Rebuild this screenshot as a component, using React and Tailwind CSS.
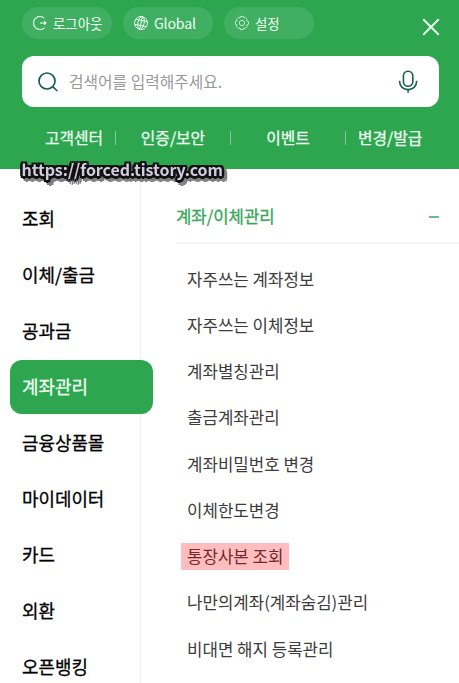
import { X } from 'lucide-react'

const LogoutIcon = () => (
  <svg className="h-4 w-4 shrink-0" viewBox="0 0 16 16" fill="none" stroke="currentColor" strokeWidth="1.1">
    <path d="M12.4 3.2A6.5 6.5 0 1 0 12.4 12.8" />
    <path d="M8 8h6" />
    <path d="M12 5.6L14.8 8 12 10.4z" fill="currentColor" stroke="none" />
  </svg>
)

const GlobeIcon = () => (
  <svg className="h-4 w-4 shrink-0" viewBox="0 0 16 16" fill="none" stroke="currentColor" strokeWidth="0.9">
    <g transform="rotate(12 8 8)">
      <circle cx="8" cy="8" r="6.5" />
      <ellipse cx="8" cy="8" rx="3.1" ry="6.5" />
      <path d="M8 1.5v13M2.2 5.4h11.6M2.2 10.6h11.6" />
    </g>
  </svg>
)

const GearIcon = () => (
  <svg className="h-4 w-4 shrink-0 opacity-80" viewBox="0 0 16 16" fill="none" stroke="currentColor" strokeWidth="0.9">
    <path d="M6.6 1.4h2.8l.5 1.5 1.4-.6 2 2-.7 1.4 1.9.8v2.9l-1.8.6.6 1.5-2 2-1.5-.6-.6 1.7H6.5l-.5-1.7-1.5.6-2-2 .7-1.5-1.8-.6V6.5l1.8-.6-.7-1.5 2-2 1.5.6z" strokeLinejoin="round" />
    <circle cx="8" cy="8" r="2.7" />
  </svg>
)

const SearchIcon = () => (
  <svg className="h-5 w-5 shrink-0" viewBox="0 0 20 20" fill="none" stroke="#175f4b" strokeWidth="1.7">
    <circle cx="9" cy="9" r="8" />
    <path d="M14.7 14.7l4.6 4.3" />
  </svg>
)

const MicIcon = () => (
  <svg className="h-6 w-5 shrink-0" viewBox="0 0 20 24" fill="none" stroke="#175f4b" strokeWidth="1.6">
    <rect x="5.4" y="1.3" width="9.4" height="15" rx="4.7" />
    <path d="M1.6 10.8v.8c0 4.7 3.7 8 8.5 8s8.5-3.3 8.5-8v-.8M10.1 19.6v3.2" />
  </svg>
)

const quickLinks = [
  { label: '로그아웃', icon: LogoutIcon },
  { label: 'Global', icon: GlobeIcon },
  { label: '설정', icon: GearIcon },
]

const categories = ['조회', '이체/출금', '공과금', '계좌관리', '금융상품몰', '마이데이터', '카드', '외환', '오픈뱅킹']

const menuItems = [
  '자주쓰는 계좌정보',
  '자주쓰는 이체정보',
  '계좌별칭관리',
  '출금계좌관리',
  '계좌비밀번호 변경',
  '이체한도변경',
  '통장사본 조회',
  '나만의계좌(계좌숨김)관리',
  '비대면 해지 등록관리',
]

const App = () => {
  return (
    <div className="relative flex h-[683px] w-[459px] flex-col overflow-hidden bg-white font-['Noto_Sans_CJK_KR',sans-serif] whitespace-nowrap">
      {/* Header */}
      <header className="h-[169px] shrink-0 bg-[#2ea650] pt-[7px] text-[#effff3]">
        <div className="flex h-8 items-center pr-[18px] pl-[22px]">
          <div className="flex gap-[11px]">
            {quickLinks.map(({ label, icon: Icon }) => (
              <button key={label} className="flex h-8 w-[90px] items-center gap-[5px] rounded-full bg-[#40af61] pl-[10px] text-[13.4px]">
                <Icon />
                <span className={label === 'Global' ? 'pt-px text-[14.2px] tracking-[-0.2px]' : ''}>{label}</span>
              </button>
            ))}
          </div>
          <X className="mt-2 ml-auto h-5 w-5 scale-[1.45]" strokeWidth={1.5} />
        </div>

        {/* Search */}
        <div className="mt-[17px] ml-[22px] flex h-[51px] w-[417px] items-center rounded-xl bg-white pr-[21px] pl-4">
          <SearchIcon />
          <span className="ml-[11px] text-[15.8px] text-[#999]">검색어를 입력해주세요.</span>
          <span className="ml-auto">
            <MicIcon />
          </span>
        </div>

        <nav className="mt-[19px] flex h-6 items-center text-[15.8px] [-webkit-text-stroke:0.25px_currentColor]">
          <span className="w-[115px] pl-[45px]">고객센터</span>
          <i className="h-[14px] w-px bg-[#82cb96]" />
          <span className="w-[114px] text-center">인증/보안</span>
          <i className="h-[14px] w-px bg-[#82cb96]" />
          <span className="w-[114px] text-center">이벤트</span>
          <i className="h-[14px] w-px bg-[#82cb96]" />
          <span className="pl-[12px]">변경/발급</span>
        </nav>
      </header>

      <div className="flex flex-1">
        {/* Categories */}
        <aside className="w-[141px] shrink-0 border-r border-[#eee] pt-[22px] pl-[10px]">
          {categories.map((name) => (
            <div key={name} className="flex h-[56.1px] items-center">
              <div
                className={
                  name === '계좌관리'
                    ? 'relative flex h-[54px] w-[143px] shrink-0 items-center rounded-xl bg-[#2ea650] pb-[2px] pl-3 text-[17.9px] text-[#effff3] shadow-xs [-webkit-text-stroke:0.3px_currentColor]'
                    : 'pb-[2px] pl-3 text-[17.9px] text-black [-webkit-text-stroke:0.3px_currentColor]'
                }
              >
                {name}
              </div>
            </div>
          ))}
        </aside>

        {/* Menu */}
        <main className="flex-1 pl-[35px]">
          <div className="flex h-[75px] items-center justify-between border-b-2 border-[#f4f4f4] pt-[23px] pr-5">
            <h2 className="text-[16.7px] text-[#36a657] [-webkit-text-stroke:0.3px_currentColor]">계좌/이체관리</h2>
            <i className="h-[2px] w-[10px] bg-[#6dbb85]" />
          </div>
          <ul className="pt-[12px] pl-[5px] text-[16.8px] text-[#3c3c3c]">
            {menuItems.map((item) => (
              <li key={item} className="flex h-[46.25px] items-center">
                <span
                  className={
                    item === '통장사본 조회' ? 'flex h-[27px] w-[108px] items-center bg-[#ffbdbf] pl-[6px] text-[#6e2a2c]' : 'pl-[6px]'
                  }
                >
                  {item}
                </span>
              </li>
            ))}
          </ul>
        </main>
      </div>

      {/* Watermark */}
      <div className="absolute top-[157px] left-[21.5px] font-['Noto_Sans_CJK_KR',sans-serif] text-[16px] leading-6 font-bold tracking-[-0.05px] text-[#d0cde0] [filter:drop-shadow(3px_3px_0_#808080)] [text-shadow:2.5px_0_#111,-2.5px_0_#111,0_2.5px_#111,0_-2.5px_#111,2px_2px_#111,-2px_2px_#111,2px_-2px_#111,-2px_-2px_#111]">
        https://forced.tistory.com
      </div>
    </div>
  )
}

export default App
